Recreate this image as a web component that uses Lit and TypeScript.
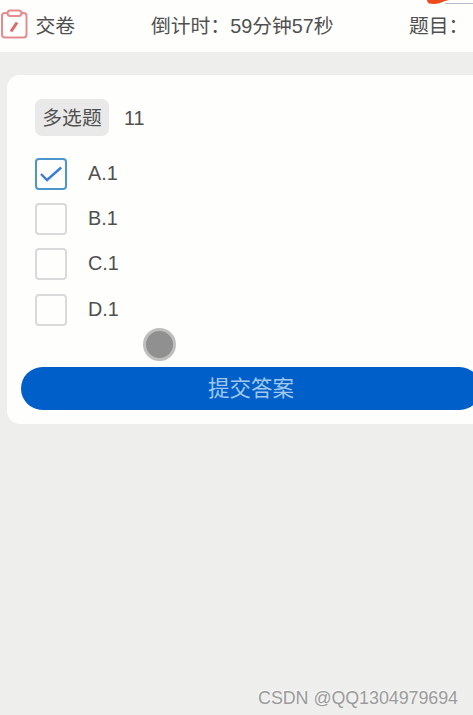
import { LitElement, html, css } from "lit";
import { customElement, state } from "lit/decorators.js";
import { classMap } from "lit/directives/class-map.js";

@customElement("option-row")
class OptionRow extends LitElement {
  static properties = { label: { type: String }, checked: { type: Boolean } };
  declare label: string;
  declare checked: boolean;

  static styles = css`
    :host { display: flex; align-items: center; height: 32px; gap: 21px; cursor: pointer; }
    .box {
      box-sizing: border-box; width: 32px; height: 32px; border-radius: 4px;
      border: 2px solid #dadada; background: #fefefd;
    }
    .box.on { border-color: #4b97cd; }
    svg { display: block; width: 28px; height: 28px; }
    .label { font-size: 19.8px; line-height: 28px; margin-top: -2px; }
  `;

  render() {
    return html`
      <div class=${classMap({ box: true, on: this.checked })}>
        ${this.checked
          ? html`<svg viewBox="0 0 28 28" fill="none">
              <path d="M4 14 L10 20 L24.200 7.500" stroke="#3b7ed6" stroke-width="2.400" />
            </svg>`
          : ""}
      </div>
      <span class="label">${this.label}</span>
    `;
  }
}

@customElement("app-root")
class AppRoot extends LitElement {
  @state() selected = "A.1";
  options = ["A.1", "B.1", "C.1", "D.1"];

  static styles = css`
    :host {
      display: block; position: relative; width: 100%; height: 715px; overflow: hidden;
      background: #eeeeed; color: #505050;
      font: 19.8px/28px "Liberation Sans", "Noto Sans CJK SC", sans-serif;
    }
    .bar {
      box-sizing: border-box; display: flex; align-items: center; width: 489px; height: 52px;
      background: #fefefd; white-space: nowrap;
    }
    .submit { display: flex; align-items: center; width: 151px; gap: 6.5px; }
    .submit svg { width: 29px; height: 32px; display: block; margin-top: -4px; }
    .timer { width: 258px; }
    .card {
      box-sizing: border-box; width: 488px; height: 349px; margin: 23px 0 0 7px;
      padding: 24px 14px 14px; border-radius: 13px; background: #fefefd;
      display: flex; flex-direction: column;
    }
    .question { display: flex; align-items: center; gap: 15px; margin-left: 14px; }
    .tag {
      box-sizing: border-box; width: 74px; height: 37px; line-height: 37px; padding-top: 1px;
      text-align: center; border-radius: 7px; background: #e9e9e9;
    }
    .options { display: flex; flex-direction: column; gap: 13.2px; margin: 22px 0 0 14px; }
    .answer {
      margin-top: auto; height: 43px; width: 460px; border: 0; border-radius: 22px; padding: 2px 0 0;
      background: #005fc8; color: #a1c9ee; font: inherit; font-size: 21.5px; line-height: 41px;
    }
    .pointer {
      position: absolute; left: 142.500px; top: 327.500px; box-sizing: border-box;
      width: 33px; height: 33px; border-radius: 50%; background: #909090; border: 3px solid #bebebe;
    }
    .corner { position: absolute; left: 427px; top: 0; width: 46px; height: 5px; }
    .watermark {
      position: absolute; right: 15px; bottom: 5px; font-size: 17.8px; line-height: 24px;
      color: #9b9b9b; text-shadow: -1px -1px 0 #fafafa; white-space: nowrap;
    }
  `;

  render() {
    return html`
      <header class="bar">
        <div class="submit">
          <svg viewBox="0 0 29 32" fill="none" stroke="#e58b90" stroke-width="2">
            <path d="M7 5H5Q2 5 2 8V26.500Q2 29.500 5 29.500H23.500Q26.500 29.500 26.500 26.500V8Q26.500 5 23.500 5H22" />
            <rect x="7.500" y="2.500" width="14" height="5.500" rx="2.700" />
            <path d="M11 23.500L17 14.500" stroke="#e0666e" stroke-width="3" />
          </svg>
          <span>交卷</span>
        </div>
        <div class="timer">倒计时：59分钟57秒</div>
        <div>题目：</div>
      </header>
      <main class="card">
        <div class="question"><span class="tag">多选题</span><span>11</span></div>
        <div class="options">
          ${this.options.map(
            (o) => html`<option-row .label=${o} .checked=${o === this.selected}
              @click=${() => (this.selected = o)}></option-row>`
          )}
        </div>
        <button class="answer">提交答案</button>
      </main>
      <div class="pointer"></div>
      <svg class="corner" viewBox="0 0 46 5">
        <path d="M18 3.500H46" stroke="#b5bfd0" />
        <path d="M0 0H22Q17 1 13 3Q8 4.500 2 3.500Q0 2.500 0 0Z" fill="#ef4a1c" />
      </svg>
      <div class="watermark">CSDN @QQ1304979694</div>
    `;
  }
}
